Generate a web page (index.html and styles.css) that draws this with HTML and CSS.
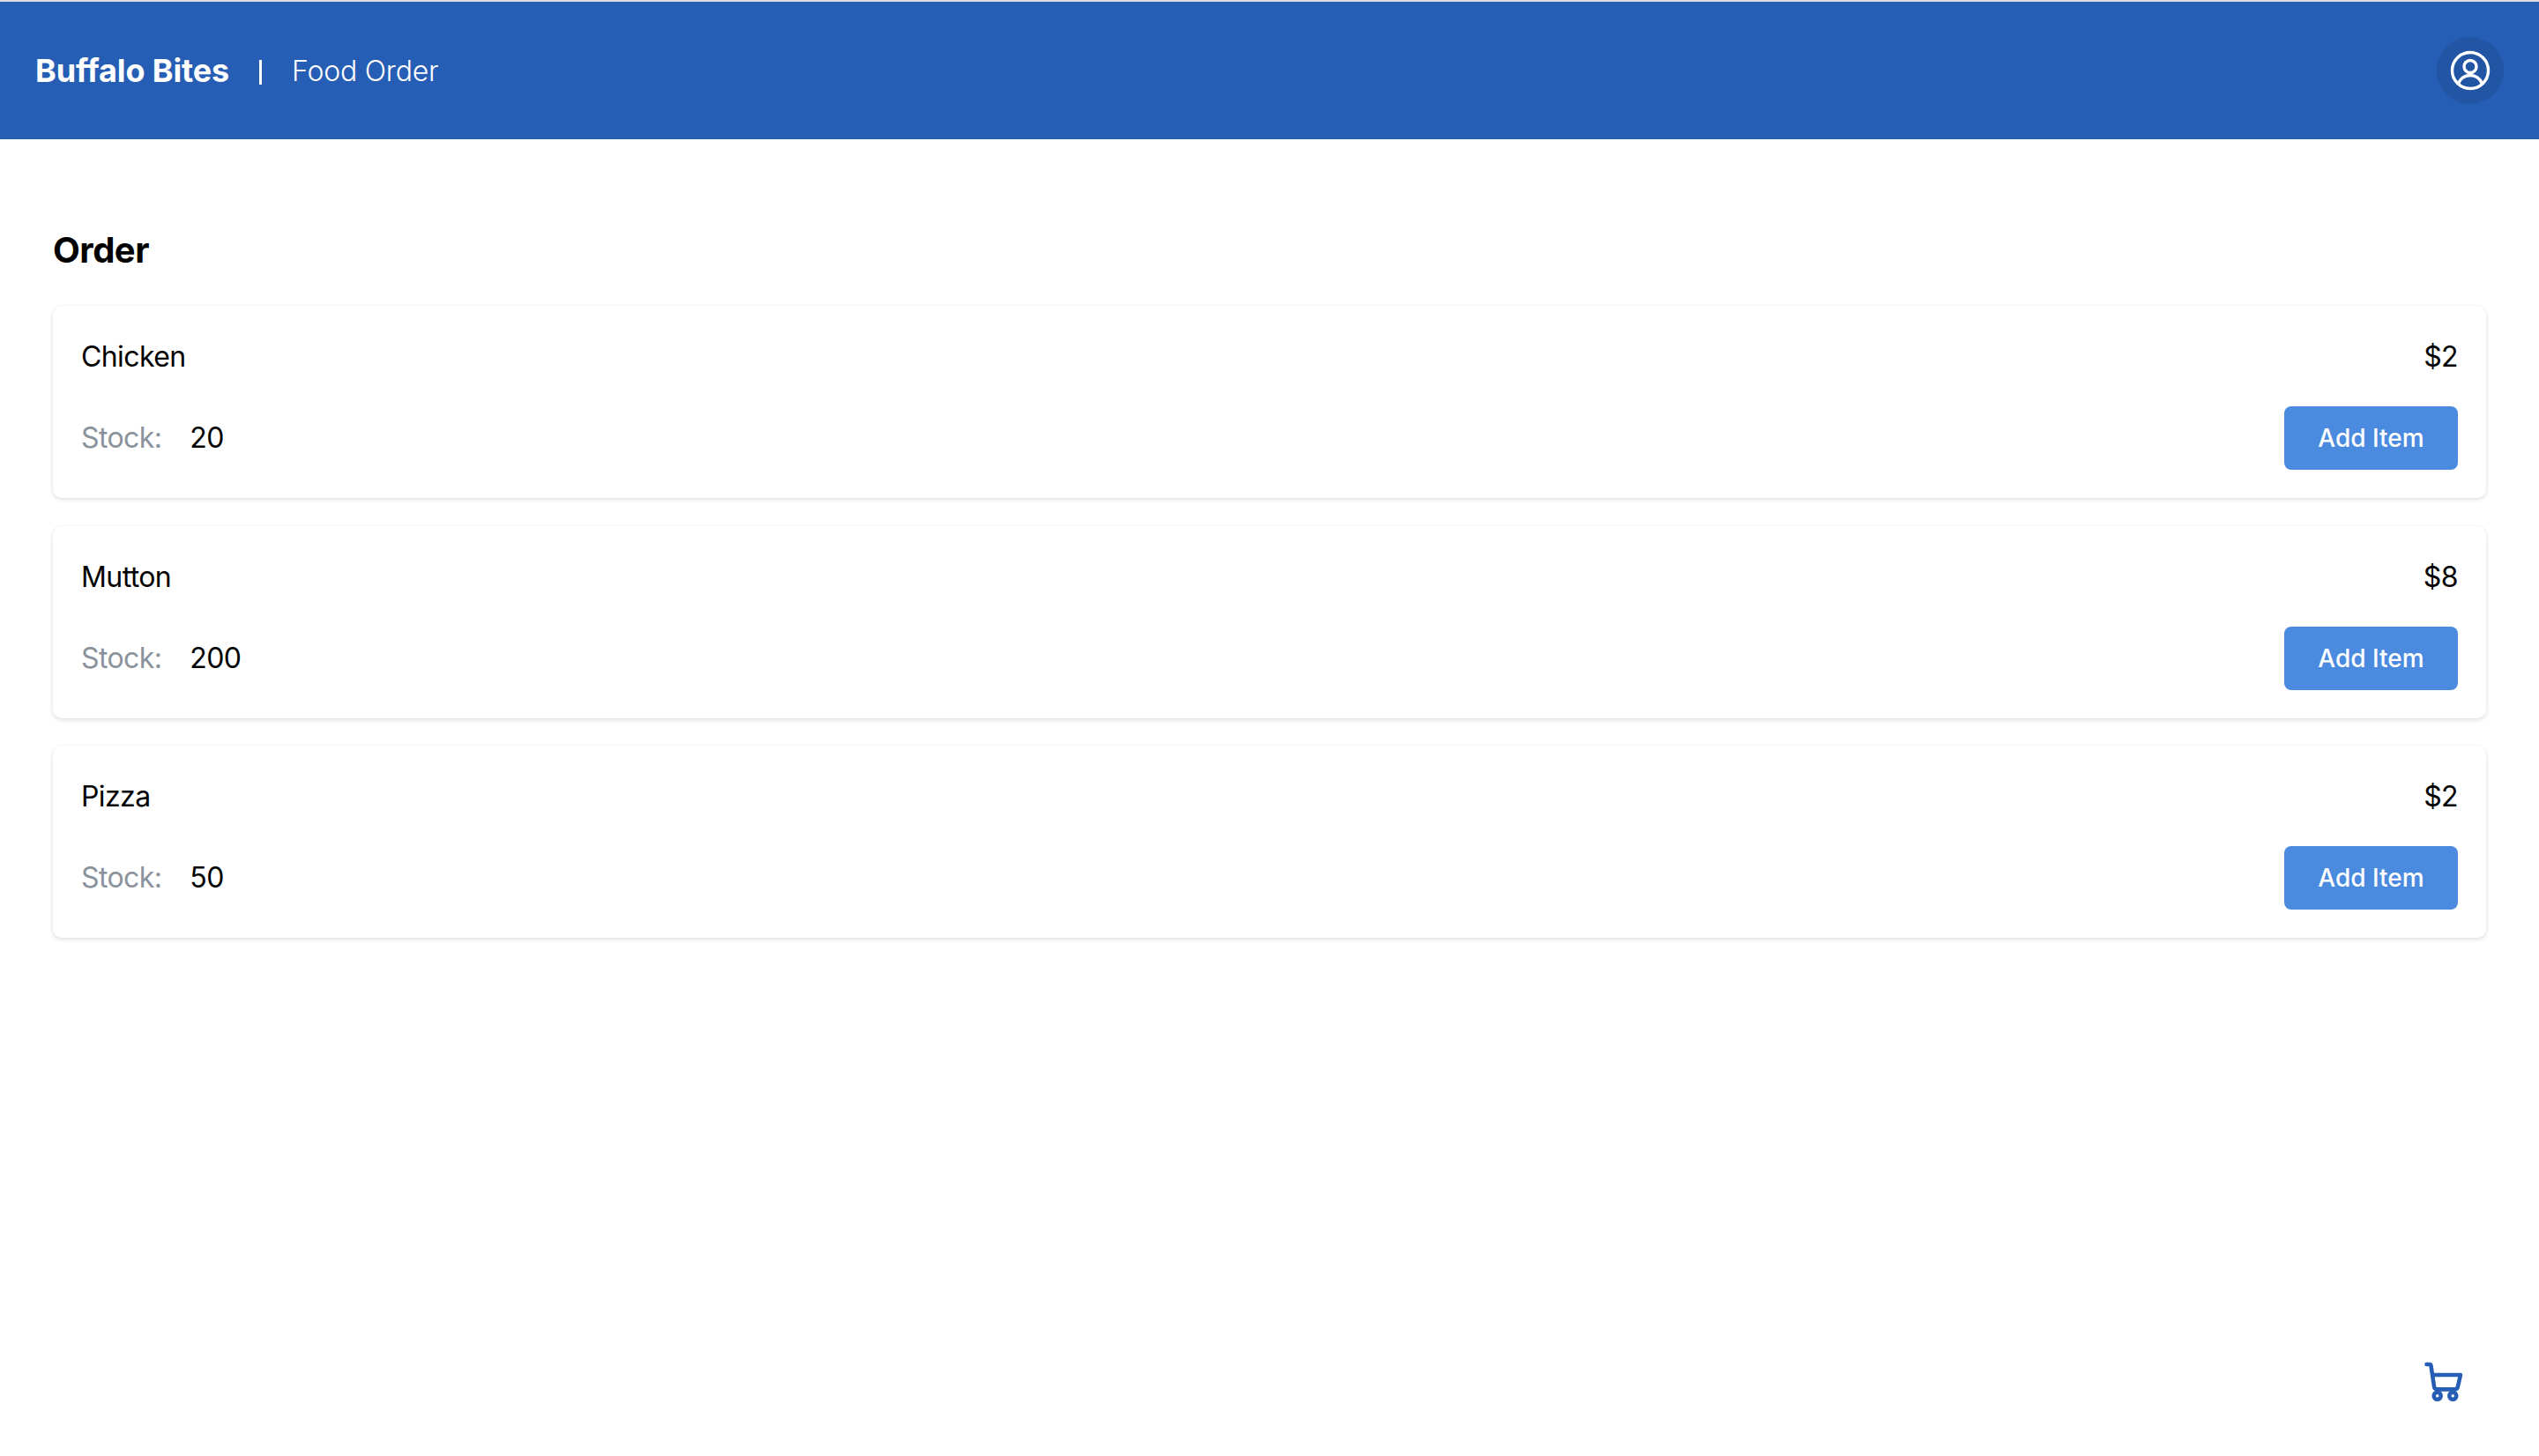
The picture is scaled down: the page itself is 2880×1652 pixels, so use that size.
FILE: index.html
```html
<!DOCTYPE html>
<html lang="en">

<head>
    <meta charset="UTF-8">
    <meta name="viewport" content="width=device-width, initial-scale=1.0">
    <title>Buffalo Bites | Food Order</title>
    <link rel="stylesheet" href="styles.css">
</head>

<body>
    <header class="topbar">
        <div class="brand">
            <span class="brand-name">Buffalo Bites</span>
            <span class="brand-divider"></span>
            <span class="brand-page">Food Order</span>
        </div>
        <button class="avatar-btn" aria-label="Account">
            <svg width="48" height="48" viewBox="0 0 48 48" fill="none" stroke="#fff" stroke-width="3.4">
                <circle cx="24" cy="24" r="20.5" />
                <circle cx="24" cy="19.5" r="7" />
                <path d="M10.5 39c2.5-6 7.5-9.5 13.5-9.5S35 33 37.5 39" />
            </svg>
        </button>
    </header>

    <main class="content">
        <h1 class="page-title">Order</h1>
        <div class="order-list">
            <div class="card">
                <div class="card-row">
                    <span>Chicken</span>
                    <span>$2</span>
                </div>
                <div class="card-row">
                    <div class="stock"><span class="stock-label">Stock:</span><span>20</span></div>
                    <button class="add-btn">Add Item</button>
                </div>
            </div>
            <div class="card">
                <div class="card-row">
                    <span>Mutton</span>
                    <span>$8</span>
                </div>
                <div class="card-row">
                    <div class="stock"><span class="stock-label">Stock:</span><span>200</span></div>
                    <button class="add-btn">Add Item</button>
                </div>
            </div>
            <div class="card">
                <div class="card-row">
                    <span>Pizza</span>
                    <span>$2</span>
                </div>
                <div class="card-row">
                    <div class="stock"><span class="stock-label">Stock:</span><span>50</span></div>
                    <button class="add-btn">Add Item</button>
                </div>
            </div>
        </div>
    </main>

    <button class="cart-btn" aria-label="Cart">
        <svg width="48" height="48" viewBox="0 0 48 48" fill="none" stroke="#265db5" stroke-width="4.6" stroke-linecap="round" stroke-linejoin="round">
            <path d="M3.5 4h3.2c1 0 1.6.6 1.8 1.5L12 29c.3 1.9 1.5 3.4 3.4 3.4h20.2c1.9 0 3-1.3 3.3-3.2L42 16H10" />
            <circle cx="15.7" cy="39.8" r="4" />
            <circle cx="33.3" cy="39.8" r="4" />
        </svg>
    </button>
</body>

</html>
```

FILE: styles.css
```css
html,
body {
    height: 100%;
}

body {
    margin: 0;
    background-color: #fff;
    color: #000;
    font-family: Inter, "Liberation Sans", sans-serif;
    font-size: 32px;
    position: relative;
}

.topbar {
    box-sizing: border-box;
    height: 158px;
    border-top: 2px solid #dcdcdc;
    background-color: #265db5;
    color: #fff;
    display: flex;
    justify-content: space-between;
    align-items: center;
    padding: 0 40px;
}

.brand {
    display: flex;
    align-items: center;
}

.brand-name {
    font-size: 36px;
    font-weight: 700;
    letter-spacing: -0.15px;
}

.brand-divider {
    width: 3px;
    height: 28px;
    margin: 4px 34px 0 34px;
    background-color: #fff;
}

.brand-page {
    font-size: 32px;
    font-weight: 300;
    letter-spacing: -0.2px;
}

.avatar-btn {
    width: 76px;
    height: 76px;
    padding: 0;
    border: none;
    border-radius: 50%;
    background-color: #2255a4;
    display: flex;
    align-items: center;
    justify-content: center;
}

.content {
    padding: 101px 60px 0;
}

.page-title {
    margin: 0 0 38px;
    font-size: 40px;
    line-height: 50px;
    font-weight: 700;
    letter-spacing: -0.5px;
}

.order-list {
    display: flex;
    flex-direction: column;
    gap: 31.5px;
}

.card {
    padding: 33px 32px 32px;
    border-radius: 10px;
    background-color: #fff;
    box-shadow: 0 2px 5px rgba(0, 0, 0, 0.12), 0 0 2px rgba(0, 0, 0, 0.05);
    display: flex;
    flex-direction: column;
    gap: 31px;
}

.card-row {
    display: flex;
    justify-content: space-between;
    align-items: center;
    line-height: 50px;
    letter-spacing: -0.6px;
}

.stock {
    display: flex;
    gap: 32px;
}

.stock-label {
    color: #8a929b;
}

.add-btn {
    width: 197px;
    height: 72px;
    padding: 0;
    border: none;
    border-radius: 8px;
    background-color: #4a8adf;
    color: #fff;
    font-family: inherit;
    font-size: 28px;
    font-weight: 500;
    letter-spacing: 0;
}

.cart-btn {
    position: absolute;
    left: 2749px;
    top: 1544px;
    padding: 0;
    border: none;
    background: none;
    line-height: 0;
}
```
